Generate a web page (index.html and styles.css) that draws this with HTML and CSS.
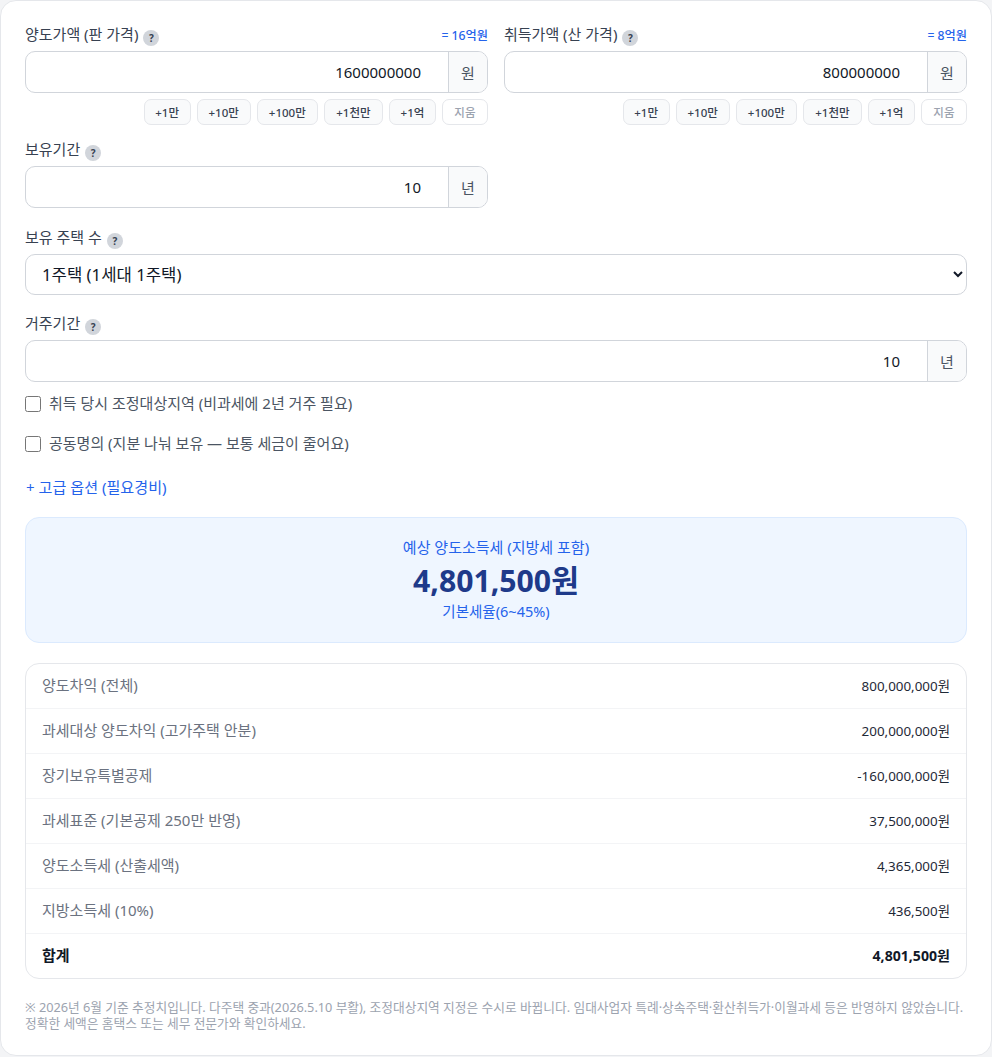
FILE: index.html
```html
<!DOCTYPE html>
<html lang="ko">
<head>
<meta charset="utf-8">
<title>양도소득세 계산기</title>
<link rel="stylesheet" href="styles.css">
</head>
<body>
<main class="card">
  <div class="grid">
    <div class="field">
      <div class="label-row"><label class="label">양도가액 (판 가격) <span class="help">?</span></label><span class="hint">= 16억원</span></div>
      <div class="input-group"><input class="num" type="text" value="1600000000"><span class="unit">원</span></div>
      <div class="chips"><button class="chip">+1만</button><button class="chip">+10만</button><button class="chip">+100만</button><button class="chip">+1천만</button><button class="chip">+1억</button><button class="chip clear">지움</button></div>
    </div>
    <div class="field">
      <div class="label-row"><label class="label">취득가액 (산 가격) <span class="help">?</span></label><span class="hint">= 8억원</span></div>
      <div class="input-group"><input class="num" type="text" value="800000000"><span class="unit">원</span></div>
      <div class="chips"><button class="chip">+1만</button><button class="chip">+10만</button><button class="chip">+100만</button><button class="chip">+1천만</button><button class="chip">+1억</button><button class="chip clear">지움</button></div>
    </div>
    <div class="field">
      <div class="label-row"><label class="label">보유기간 <span class="help">?</span></label></div>
      <div class="input-group"><input class="num" type="text" value="10"><span class="unit">년</span></div>
    </div>
  </div>
  <div class="field wide">
    <div class="label-row"><label class="label">보유 주택 수 <span class="help">?</span></label></div>
    <select class="select"><option>1주택 (1세대 1주택)</option></select>
  </div>
  <div class="field wide second">
    <div class="label-row"><label class="label">거주기간 <span class="help">?</span></label></div>
    <div class="input-group"><input class="num" type="text" value="10"><span class="unit">년</span></div>
  </div>
  <label class="check first"><input type="checkbox"><span>취득 당시 조정대상지역 (비과세에 2년 거주 필요)</span></label>
  <label class="check"><input type="checkbox"><span>공동명의 (지분 나눠 보유 — 보통 세금이 줄어요)</span></label>
  <a class="advanced" href="#">+ 고급 옵션 (필요경비)</a>
  <section class="result">
    <div class="result-title">예상 양도소득세 (지방세 포함)</div>
    <div class="result-amount">4,801,500원</div>
    <div class="result-sub">기본세율(6~45%)</div>
  </section>
  <section class="table">
    <div class="row"><span>양도차익 (전체)</span><b>800,000,000원</b></div>
    <div class="row"><span>과세대상 양도차익 (고가주택 안분)</span><b>200,000,000원</b></div>
    <div class="row"><span>장기보유특별공제</span><b>-160,000,000원</b></div>
    <div class="row"><span>과세표준 (기본공제 250만 반영)</span><b>37,500,000원</b></div>
    <div class="row"><span>양도소득세 (산출세액)</span><b>4,365,000원</b></div>
    <div class="row"><span>지방소득세 (10%)</span><b>436,500원</b></div>
    <div class="row total"><span>합계</span><b>4,801,500원</b></div>
  </section>
  <p class="note">※ 2026년 6월 기준 추정치입니다. 다주택 중과(2026.5.10 부활), 조정대상지역 지정은 수시로 바뀝니다. 임대사업자 특례·상속주택·환산취득가·이월과세 등은 반영하지 않았습니다. 정확한 세액은 홈택스 또는 세무 전문가와 확인하세요.</p>
</main>
</body>
</html>
```
FILE: styles.css
```css
* { box-sizing: border-box; }
html, body { margin: 0; padding: 0; }
body {
  background: #f3f4f6;
  font-family: "Noto Sans", "Noto Sans CJK KR", sans-serif;
  color: #111827;
}
.card {
  width: 992px;
  height: 1056px;
  background: #fff;
  border: 1px solid #e5e7eb;
  border-radius: 16px;
  padding: 24px;
}
.grid { display: grid; grid-template-columns: 463px 463px; column-gap: 16px; row-gap: 15px; }
.field.wide { margin-top: 20px; }
.field.wide.second { margin-top: 19px; }
.label-row { display: flex; justify-content: space-between; align-items: flex-start; height: 26px; }
.label { font-size: 15px; line-height: 18px; color: #374151; display: flex; align-items: flex-start; gap: 5px; }
.help {
  width: 16px; height: 16px; border-radius: 50%;
  background: #d1d5db; color: #374151;
  font-size: 10px; font-weight: 700; line-height: 16px; text-align: center;
  margin-top: 5px;
}
.hint { font-size: 12.2px; font-weight: 500; color: #2563eb; line-height: 22px; }
.input-group {
  display: flex; height: 42px;
  border: 1px solid #d1d5db; border-radius: 10px; overflow: hidden; background: #fff;
}
.num {
  flex: 1; min-width: 0; border: 0; outline: 0; background: transparent;
  text-align: right; padding: 0 27px 0 16px;
  font: 15px "Noto Sans", "Noto Sans CJK KR", sans-serif; color: #111827;
}
.unit {
  width: 39px; display: flex; align-items: center; justify-content: center;
  background: #f9fafb; border-left: 1px solid #d1d5db;
  font-size: 15px; color: #4b5563;
}
.chips { display: flex; justify-content: flex-end; gap: 6px; margin-top: 6px; }
.chip {
  height: 26px; padding: 0 11px;
  border: 1px solid #e5e7eb; border-radius: 7px; background: #f9fafb;
  font: 500 11.5px "Noto Sans", "Noto Sans CJK KR", sans-serif; color: #374151;
}
.chip:nth-child(1), .chip:nth-child(5) { padding: 0 10.5px; }
.chip:nth-child(4) { padding: 0 11.5px; }
.chip.clear { background: #fff; color: #9ca3af; padding: 0 11.5px; }
.select {
  display: block; width: 100%; height: 41px;
  border: 1px solid #d1d5db; border-radius: 10px; background: #fff;
  padding: 0 12px;
  font: 16.7px "Noto Sans", "Noto Sans CJK KR", sans-serif; color: #111827;
}
.check { display: flex; align-items: center; gap: 8px; height: 20px; margin-top: 20px; font-size: 15px; color: #4b5563; }
.check.first { margin-top: 12px; }
.check input { width: 16px; height: 16px; margin: 0; }
.check span { padding-bottom: 3px; }
.advanced { display: block; margin-top: 23px; margin-left: 1px; font-size: 15.1px; line-height: 20px; color: #2563eb; text-decoration: none; }
.result {
  margin-top: 20px; height: 126px;
  border: 1px solid #dbeafe; border-radius: 14px; background: #eff6ff;
  display: flex; flex-direction: column; align-items: center; padding-top: 19px;
}
.result-title { font-size: 15px; line-height: 20px; color: #2563eb; }
.result-amount { font-size: 30.2px; font-weight: 700; line-height: 40px; color: #1e3a8a; margin-top: 4px; }
.result-sub { font-size: 14.5px; line-height: 20px; color: #2563eb; }
.table { margin-top: 20px; border: 1px solid #e5e7eb; border-radius: 14px; overflow: hidden; }
.row {
  display: flex; justify-content: space-between; align-items: center;
  height: 45px; padding: 0 16px;
  border-bottom: 1px solid #f3f4f6;
  font-size: 15px; color: #6b7280;
}
.row span, .row b { padding-bottom: 3px; }
.row b { font-weight: 400; font-size: 13.4px; color: #1f2937; }
.row.total { border-bottom: 0; height: 44px; color: #111827; }
.row.total span { font-weight: 700; }
.row.total b { font-weight: 700; font-size: 14.1px; color: #111827; }
.note { margin: 20px 0 0; font-size: 12.72px; line-height: 16px; color: #9ca3af; word-break: keep-all; }
```
